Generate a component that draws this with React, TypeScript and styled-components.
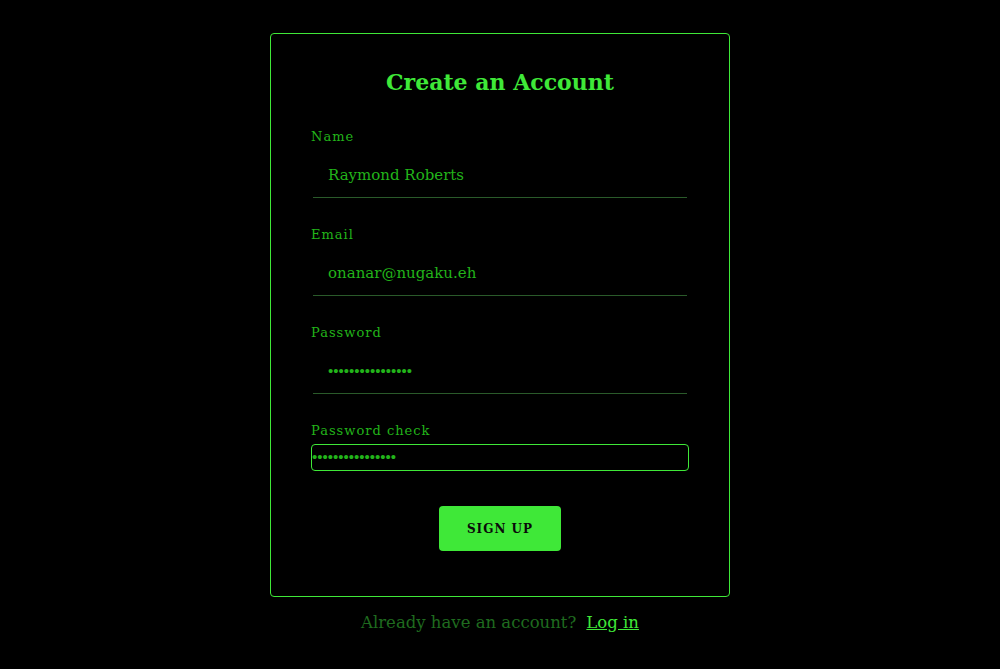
import React from 'react'
import styled, { createGlobalStyle, css } from 'styled-components'

const GlobalStyle = createGlobalStyle`
  html, body {
    margin: 0;
    padding: 0;
    background: #000;
  }
  body {
    font-family: "DejaVu Serif", "Liberation Serif", serif;
  }
`

const Page = styled.main`
  display: flex;
  flex-direction: column;
  align-items: center;
  padding-top: 33px;
  min-height: 669px;
  box-sizing: border-box;
`

const Card = styled.form`
  width: 460px;
  box-sizing: border-box;
  border: 1px solid #3fe838;
  border-radius: 4px;
  padding: 33px 40px 45px;
  display: flex;
  flex-direction: column;
`

const Title = styled.h1`
  margin: 0 0 32px;
  font-size: 22px;
  line-height: 30px;
  font-weight: bold;
  text-align: center;
  color: #3fe838;
`

const Field = styled.div`
  display: flex;
  flex-direction: column;
  margin-bottom: 29px;
`

const Label = styled.label`
  font-size: 13px;
  line-height: 16px;
  letter-spacing: 1px;
  color: #22b41a;
`

const Input = styled.input<{ $focused?: boolean }>`
  font-family: ${({ type }) =>
    type === 'password' ? '"Liberation Serif", serif' : 'inherit'};
  font-weight: ${({ type }) => (type === 'password' ? 'bold' : 'normal')};
  background: transparent;
  color: #22b41a;
  outline: none;
  caret-color: #3fe838;
  ${({ $focused }) =>
    $focused
      ? css`
          margin-top: 5px;
          height: 27px;
          box-sizing: border-box;
          padding: 0;
          font-size: 15px;
          border: 1px solid #3fe838;
          border-radius: 4px;
        `
      : css`
          margin: 8px 2px 0;
          height: 45px;
          box-sizing: border-box;
          padding: 0 15px;
          font-size: 15px;
          border: none;
          border-bottom: 1px solid #2a5a2a;
        `}
`

const Actions = styled.div`
  display: flex;
  justify-content: center;
  margin-top: 6px;
`

const Button = styled.button`
  width: 122px;
  height: 45px;
  border: none;
  border-radius: 4px;
  background: #3fe838;
  color: #0a0a0a;
  font-family: inherit;
  font-size: 12px;
  font-weight: bold;
  letter-spacing: 1px;
  text-transform: uppercase;
  cursor: pointer;
`

const Footer = styled.p`
  margin: 14px 0 0;
  font-size: 16.5px;
  line-height: 24px;
  color: #1f6b1f;
`

const LoginLink = styled.a`
  margin-left: 10px;
  color: #3fe838;
  text-decoration: underline;
`

interface FormFieldProps {
  id: string
  label: string
  value: string
  type?: string
  focused?: boolean
}

function FormField({ id, label, value, type = 'text', focused }: FormFieldProps) {
  return (
    <Field>
      <Label htmlFor={id}>{label}</Label>
      <Input id={id} type={type} defaultValue={value} $focused={focused} autoFocus={focused} />
    </Field>
  )
}

export default function App() {
  return (
    <>
      <GlobalStyle />
      <Page>
        <Card onSubmit={(e) => e.preventDefault()}>
          <Title>Create an Account</Title>
          <FormField id="name" label="Name" value="Raymond Roberts" />
          <FormField id="email" label="Email" value="onanar@nugaku.eh" type="email" />
          <FormField id="password" label="Password" value="1234567890abcdef" type="password" />
          <FormField id="check" label="Password check" value="1234567890abcdef" type="password" focused />
          <Actions>
            <Button type="submit">Sign up</Button>
          </Actions>
        </Card>
        <Footer>
          Already have an account?
          <LoginLink href="#">Log in</LoginLink>
        </Footer>
      </Page>
    </>
  )
}
